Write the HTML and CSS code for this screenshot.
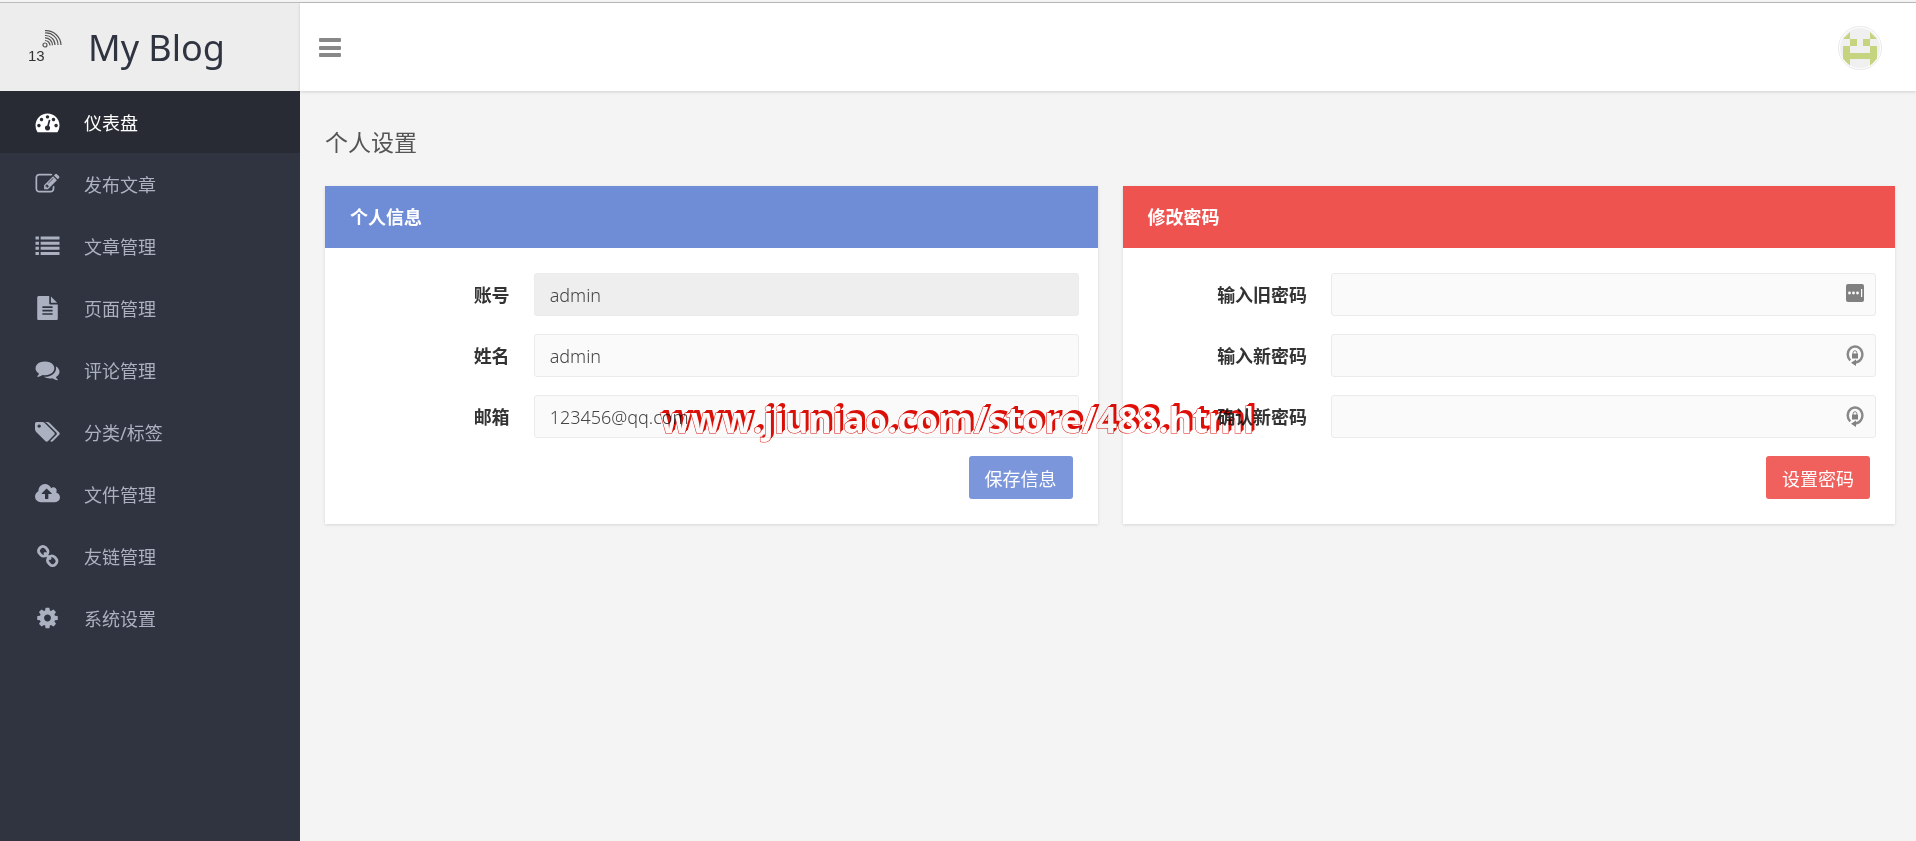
FILE: index.html
```
<!DOCTYPE html>
<html lang="zh-CN">
<head>
  <meta charset="UTF-8" />
  <meta name="viewport" content="width=device-width, initial-scale=1.0" />
  <title>个人设置 - My Blog</title>
  <link rel="stylesheet" href="styles.css">
</head>
<body>
  <div class="layout">
    <aside class="sidebar">
      <a class="brand" href="#">
        <span class="brand-logo">
          <svg width="20" height="18" viewBox="0 0 20 18" fill="none" stroke="#555" stroke-width="1.2">
            <circle cx="3" cy="15" r="2" />
            <path d="M3 10.500a5 5 0 0 1 5 5" />
            <path d="M3 7.800a7.500 7.500 0 0 1 7.500 7.500" />
            <path d="M3 5.500a9.500 9.500 0 0 1 10 9.500" />
            <path d="M3 3a12 12 0 0 1 13 12" />
            <path d="M3 .7a15 15 0 0 1 16 14.300" />
          </svg>
          <span class="brand-mark">13</span>
        </span>
        <span class="brand-name">My Blog</span>
      </a>
      <nav>
        <ul class="menu">
          <li><a class="menu-link active" href="#">
            <svg class="icon" viewBox="0 0 1792 1792"><path d="M384 1152q0-53-37.500-90.500t-90.500-37.500-90.500 37.500-37.500 90.500 37.500 90.500 90.500 37.500 90.500-37.500 37.500-90.500zm192-448q0-53-37.500-90.500t-90.500-37.500-90.500 37.500-37.500 90.500 37.500 90.500 90.500 37.500 90.500-37.500 37.500-90.500zm428 481l101-382q6-26-7.500-48.500t-38.500-29.500-48 6.500-30 39.500l-101 382q-60 5-107 43.500t-63 98.500q-20 77 20 146t117 89 146-20 89-117q16-60-6-117t-72-91zm660-33q0-53-37.500-90.500t-90.500-37.500-90.500 37.500-37.500 90.500 37.500 90.500 90.500 37.500 90.500-37.500 37.500-90.500zm-640-640q0-53-37.500-90.500t-90.500-37.500-90.500 37.500-37.500 90.500 37.500 90.500 90.500 37.500 90.500-37.500 37.500-90.500zm448 192q0-53-37.500-90.500t-90.500-37.500-90.500 37.500-37.500 90.500 37.500 90.500 90.500 37.500 90.500-37.500 37.500-90.500zm320 448q0 261-141 483-19 29-54 29h-1402q-35 0-54-29-141-221-141-483 0-182 71-348t191-286 286-191 348-71 348 71 286 191 191 286 71 348z"/></svg>
            <span>仪表盘</span></a></li>
          <li><a class="menu-link" href="#">
            <svg class="icon" viewBox="0 0 1792 1792"><path d="M888 1184l116-116-152-152-116 116v56h96v96h56zm440-720q-16-16-33 1l-350 350q-17 17-1 33t33-1l350-350q17-17 1-33zm80 594v190q0 119-84.500 203.500t-203.500 84.500h-832q-119 0-203.500-84.500t-84.500-203.500v-832q0-119 84.500-203.500t203.500-84.500h832q63 0 117 25 15 7 18 23 3 17-9 29l-49 49q-14 14-32 8-23-6-45-6h-832q-66 0-113 47t-47 113v832q0 66 47 113t113 47h832q66 0 113-47t47-113v-126q0-13 9-22l64-64q15-15 35-7t20 29zm-96-738l288 288-672 672h-288v-288zm444 132l-92 92-288-288 92-92q28-28 68-28t68 28l152 152q28 28 28 68t-28 68z"/></svg>
            <span>发布文章</span></a></li>
          <li><a class="menu-link" href="#">
            <svg class="icon" viewBox="0 0 1792 1792"><path d="M0 192h256v224H0zM384 192h1408v224H384zM0 576h256v224H0zM384 576h1408v224H384zM0 960h256v224H0zM384 960h1408v224H384zM0 1344h256v224H0zM384 1344h1408v224H384z"/></svg>
            <span>文章管理</span></a></li>
          <li><a class="menu-link" href="#">
            <svg class="icon" viewBox="0 0 1792 1792"><path d="M1596 476q14 14 28 36h-472v-472q22 14 36 28zm-476 164h544v1056q0 40-28 68t-68 28h-1344q-40 0-68-28t-28-68v-1600q0-40 28-68t68-28h800v544q0 40 28 68t68 28zm160 736v-64q0-14-9-23t-23-9h-704q-14 0-23 9t-9 23v64q0 14 9 23t23 9h704q14 0 23-9t9-23zm0-256v-64q0-14-9-23t-23-9h-704q-14 0-23 9t-9 23v64q0 14 9 23t23 9h704q14 0 23-9t9-23zm0-256v-64q0-14-9-23t-23-9h-704q-14 0-23 9t-9 23v64q0 14 9 23t23 9h704q14 0 23-9t9-23z"/></svg>
            <span>页面管理</span></a></li>
          <li><a class="menu-link" href="#">
            <svg class="icon" viewBox="0 0 1792 1792"><path d="M1408 768q0 139-94 257t-256.500 186.500-353.500 68.500q-86 0-176-16-124 88-278 128-36 9-86 16h-3q-11 0-20.500-8t-11.500-21q-1-3-1-6.500t.5-6.500 2-6l2.500-5 3.500-5.500 4-5 4.500-5 4-4.500q5-6 23-25t26-29.500 22.500-29 25-38.500 20.500-44q-124-72-195-177t-71-224q0-139 94-257t256.500-186.500 353.500-68.500 353.500 68.500 256.500 186.500 94 257zm384 256q0 120-71 224.500t-195 176.500q10 24 20.500 44t25 38.500 22.500 29 26 29.500 23 25q1 1 4 4.500t4.500 5 4 5 3.500 5.500l2.500 5 2 6 .5 6.500-1 6.500q-3 14-13 22t-22 7q-50-7-86-16-154-40-278-128-90 16-176 16-271 0-472-132 58 4 88 4 161 0 309-45t264-129q125-92 192-212t67-254q0-77-23-152 129 71 204 178t75 230z"/></svg>
            <span>评论管理</span></a></li>
          <li><a class="menu-link" href="#">
            <svg class="icon" viewBox="0 0 1920 1792"><path d="M448 448q0-53-37.500-90.500t-90.500-37.500-90.500 37.500-37.500 90.500 37.500 90.500 90.500 37.500 90.500-37.500 37.500-90.500zm1067 576q0 53-37 90l-491 492q-39 37-91 37-53 0-90-37l-715-716q-38-37-64.500-101t-26.500-117v-416q0-52 38-90t90-38h416q53 0 117 26.500t102 64.500l715 714q37 39 37 91zm384 0q0 53-37 90l-491 492q-39 37-91 37-36 0-59-14t-53-45l470-470q37-37 37-90 0-52-37-91l-715-714q-38-38-102-64.500t-117-26.500h224q53 0 117 26.500t102 64.500l715 714q37 39 37 91z"/></svg>
            <span>分类/标签</span></a></li>
          <li><a class="menu-link" href="#">
            <svg class="icon" viewBox="0 0 1920 1792"><path d="M1280 864q0-14-9-23l-352-352q-9-9-23-9t-23 9l-351 351q-10 12-10 24 0 14 9 23t23 9h224v352q0 13 9.500 22.500t22.500 9.500h192q13 0 22.500-9.500t9.500-22.500v-352h224q13 0 22.500-9.500t9.500-22.500zm640 288q0 159-112.500 271.500t-271.500 112.500h-1088q-185 0-316.500-131.500t-131.500-316.500q0-130 70-240t188-165q-2-30-2-43 0-212 150-362t362-150q156 0 285.500 87t188.500 231q71-62 166-62 106 0 181 75t75 181q0 76-41 138 130 31 213.500 135.500t83.500 238.500z"/></svg>
            <span>文件管理</span></a></li>
          <li><a class="menu-link" href="#">
            <svg class="icon" viewBox="0 0 24 24"><g fill="none" stroke="currentColor" stroke-width="2.800" stroke-linecap="round"><rect x="3" y="3" width="9.500" height="8.500" rx="3.800" transform="rotate(45 7.750 7.250)"/><rect x="12" y="12.500" width="9.500" height="8.500" rx="3.800" transform="rotate(45 16.750 16.750)"/><path d="M9.500 9.500l5 5"/></g></svg>
            <span>友链管理</span></a></li>
          <li><a class="menu-link" href="#">
            <svg class="icon" viewBox="0 0 1792 1792"><path d="M1152 896q0-106-75-181t-181-75-181 75-75 181 75 181 181 75 181-75 75-181zm512-109v222q0 12-8 23t-20 13l-185 28q-19 54-39 91 35 50 107 138 10 12 10 25t-9 23q-27 37-99 108t-94 71q-12 0-26-9l-138-108q-44 23-91 38-16 136-29 186-7 28-36 28h-222q-14 0-24.500-8.500t-11.500-21.500l-28-184q-49-16-90-37l-141 107q-10 9-25 9-14 0-25-11-126-114-165-168-7-10-7-23 0-12 8-23 15-21 51-66.500t54-70.500q-27-50-41-99l-183-27q-13-2-21-12.500t-8-23.500v-222q0-12 8-23t19-13l186-28q14-46 39-92-40-57-107-138-10-12-10-24 0-10 9-23 26-36 98.500-107.500t94.500-71.500q13 0 26 10l138 107q44-23 91-38 16-136 29-186 7-28 36-28h222q14 0 24.500 8.500t11.500 21.500l28 184q49 16 90 37l142-107q9-9 24-9 13 0 25 10 129 119 165 170 7 8 7 22 0 12-8 23-15 21-51 66.500t-54 70.500q26 50 41 98l183 28q13 2 21 12.500t8 23.500z"/></svg>
            <span>系统设置</span></a></li>
        </ul>
      </nav>
    </aside>

    <div class="page">
      <header class="topbar">
        <button class="toggle" type="button" aria-label="切换菜单">
          <svg width="24" height="20" viewBox="0 0 24 20" fill="#888"><rect x="1" y="0" width="22" height="4" rx="1"/><rect x="1" y="8" width="22" height="4" rx="1"/><rect x="1" y="15" width="22" height="4" rx="1"/></svg>
        </button>
        <a class="avatar" href="#" aria-label="admin">
          <svg width="40" height="40" viewBox="0 0 40 40">
            <g fill="#c5d57f">
              <path d="M3 11l7-7v7zM30 4l7 7h-7z"/>
              <path d="M10 11h7v7h-7zM23 11h7v7h-7z"/>
              <path d="M3 18h7v7h20v-7h7v13l-7 7v-7H10v7l-7-7z"/>
            </g>
          </svg>
        </a>
      </header>

      <main class="content">
        <h1 class="page-title">个人设置</h1>
        <div class="panels">
          <section class="panel">
            <h2 class="panel-head panel-head-blue">个人信息</h2>
            <form class="panel-body">
              <div class="field">
                <label for="account">账号</label>
                <input type="text" id="account" value="admin" disabled />
              </div>
              <div class="field">
                <label for="nickname">姓名</label>
                <input type="text" id="nickname" value="admin" />
              </div>
              <div class="field">
                <label for="email">邮箱</label>
                <input type="email" id="email" value="123456@qq.com" />
              </div>
              <div class="actions">
                <button class="btn btn-blue" type="button">保存信息</button>
              </div>
            </form>
          </section>

          <section class="panel">
            <h2 class="panel-head panel-head-red">修改密码</h2>
            <form class="panel-body">
              <div class="field">
                <label for="old-pass">输入旧密码</label>
                <div class="input-wrap">
                  <input type="password" id="old-pass" />
                  <svg class="input-icon" width="18" height="18" viewBox="0 0 18 18"><rect width="18" height="18" rx="2" fill="#808080"/><g fill="#fff"><circle cx="3.500" cy="9" r="1.400"/><circle cx="7.500" cy="9" r="1.400"/><circle cx="11.500" cy="9" r="1.400"/><rect x="15" y="5" width="1.200" height="8"/></g></svg>
                </div>
              </div>
              <div class="field">
                <label for="new-pass">输入新密码</label>
                <div class="input-wrap">
                  <input type="password" id="new-pass" />
                  <svg class="input-icon" width="18" height="21" viewBox="0 0 18 21"><path d="M4.200 15.500A7.300 8 0 1 1 9.500 17.500" fill="none" stroke="#888" stroke-width="2.400"/><path d="M10 14.500v6.500l-5-3.200z" fill="#808080"/><rect x="6" y="8.500" width="6" height="5" fill="#808080"/><path d="M7.200 9V7.500a1.800 1.800 0 0 1 3.600 0V9" fill="none" stroke="#888"/></svg>
                </div>
              </div>
              <div class="field">
                <label for="confirm-pass">确认新密码</label>
                <div class="input-wrap">
                  <input type="password" id="confirm-pass" />
                  <svg class="input-icon" width="18" height="21" viewBox="0 0 18 21"><path d="M4.200 15.500A7.300 8 0 1 1 9.500 17.500" fill="none" stroke="#888" stroke-width="2.400"/><path d="M10 14.500v6.500l-5-3.200z" fill="#808080"/><rect x="6" y="8.500" width="6" height="5" fill="#808080"/><path d="M7.200 9V7.500a1.800 1.800 0 0 1 3.600 0V9" fill="none" stroke="#888"/></svg>
                </div>
              </div>
              <div class="actions">
                <button class="btn btn-red" type="button">设置密码</button>
              </div>
            </form>
          </section>
        </div>
      </main>
    </div>
  </div>
  <div class="watermark">www.jiuniao.com/store/488.html</div>
</body>
</html>
```
FILE: styles.css
```
:root {
  --side-bg: #2f3440;
  --side-active: #282b33;
  --side-text: #abb1c0;
  --blue: #6f8cd7;
  --red: #ef5350;
  --font-stack: "Noto Sans", "Noto Sans CJK SC", sans-serif;
}
* {
  box-sizing: border-box;
}
body {
  margin: 0;
  padding-top: 2px;
  font-family: var(--font-stack);
  font-size: 18px;
  color: #555;
  background-color: #f4f4f4;
}
.layout {
  display: flex;
  min-height: calc(100vh - 2px);
  border-top: 1px solid #bbb;
}

/* Sidebar */
.sidebar {
  flex: 0 0 300px;
  background-color: var(--side-bg);
}
.brand {
  display: flex;
  align-items: center;
  gap: 26px;
  height: 88px;
  padding-left: 28px;
  background-color: #ededed;
  color: #2f3440;
  text-decoration: none;
}
.brand-logo {
  display: flex;
  flex-direction: column;
  width: 34px;
}
.brand-logo svg {
  align-self: flex-end;
}
.brand-mark {
  color: #333;
  font-family: "Liberation Sans", sans-serif;
  font-size: 15px;
  line-height: 16px;
}
.brand-name {
  font-size: 36px;
}
.menu {
  list-style: none;
  margin: 0;
  padding: 0;
}
.menu-link {
  display: flex;
  align-items: center;
  gap: 24px;
  height: 62px;
  padding-left: 35px;
  color: var(--side-text);
  text-decoration: none;
}
.menu-link.active {
  background-color: var(--side-active);
  color: #fff;
}
.icon {
  width: 25px;
  height: 24px;
  fill: currentColor;
}

/* Top bar */
.page {
  flex: 1;
  min-width: 0;
}
.topbar {
  display: flex;
  align-items: center;
  justify-content: space-between;
  height: 88px;
  padding: 2px 34px 0 18px;
  background-color: #fff;
  box-shadow: 0 1px 3px rgba(0, 0, 0, 0.15);
}
.toggle {
  display: flex;
  padding: 0;
  border: none;
  background: none;
  cursor: pointer;
}
.avatar {
  display: flex;
  padding: 1px;
  border: 1px solid #e9e9e9;
  border-radius: 50%;
}
.avatar svg {
  border-radius: 50%;
  background-color: #f0f0f0;
}

/* Content */
.content {
  padding: 35px 21px 25px 25px;
}
.page-title {
  margin: 0 0 28px;
  font-size: 23px;
  font-weight: 400;
  line-height: 32px;
}
.panels {
  display: grid;
  grid-template-columns: 1fr 1fr;
  gap: 25px;
}
.panel {
  background-color: #fff;
  box-shadow: 0 1px 3px rgba(0, 0, 0, 0.12);
}
.panel-head {
  margin: 0;
  padding: 0 25px;
  color: #fff;
  font-size: 18px;
  font-weight: 700;
  line-height: 62px;
}
.panel-head-blue {
  background-color: var(--blue);
}
.panel-head-red {
  background-color: var(--red);
}
.panel-body {
  display: flex;
  flex-direction: column;
  gap: 18px;
  padding: 25px 19px 25px 3px;
}
.field {
  display: grid;
  grid-template-columns: 1fr 3fr;
  align-items: center;
  gap: 24px;
}
.field label {
  color: #333;
  font-weight: 700;
  line-height: 24px;
  text-align: right;
}
.field input {
  width: 100%;
  height: 43px;
  padding: 0 15px;
  border: 1px solid #ebebeb;
  border-radius: 3px;
  background-color: #fafafa;
  color: #444;
  font-family: inherit;
  font-size: 18px;
  font-weight: 300;
}
.field input:disabled {
  background-color: #eee;
}
.input-wrap {
  position: relative;
}
.input-icon {
  position: absolute;
  top: 11px;
  right: 12px;
}
.actions {
  display: flex;
  justify-content: flex-end;
  padding-right: 6px;
}
.btn {
  height: 43px;
  padding: 0 16px;
  border: none;
  border-radius: 3px;
  color: #fff;
  font-family: inherit;
  font-size: 18px;
  cursor: pointer;
}
.btn-blue {
  background-color: #7b96da;
}
.btn-red {
  background-color: #f0605d;
}

/* Site address laid over the page */
.watermark {
  position: absolute;
  top: 395px;
  left: 660px;
  color: #fff;
  font-family: "Open Sans", sans-serif;
  font-size: 36px;
  font-weight: 700;
  line-height: 50px;
  -webkit-text-stroke: 1px #e01008;
  paint-order: stroke fill;
  text-shadow: 1px -1px 0 #e01008, 2px -2px 0 #e01008, 3px -3px 0 #e01008;
  mix-blend-mode: multiply;
  pointer-events: none;
}
```
